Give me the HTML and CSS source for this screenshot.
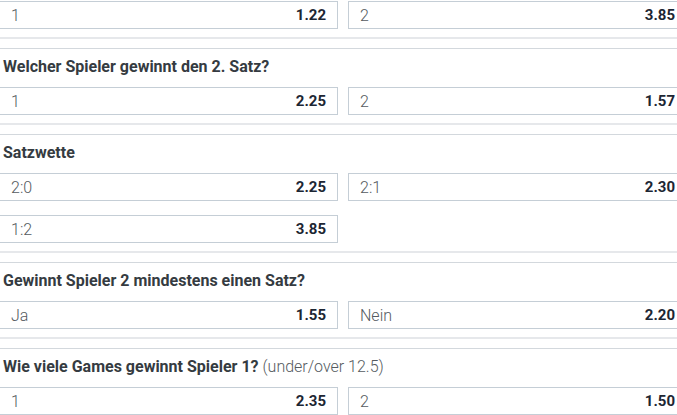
FILE: index.html
```html
<!DOCTYPE html>
<html lang="de">
<head>
    <meta charset="UTF-8">
    <meta name="viewport" content="width=device-width, initial-scale=1.0">
    <title>Wetten</title>
    <link rel="stylesheet" href="styles.css">
</head>
<body>
    <div class="markets">
        <div class="market market-first">
            <div class="odds-grid">
                <button class="odd"><span class="label">1</span><span class="price">1.22</span></button>
                <button class="odd"><span class="label">2</span><span class="price">3.85</span></button>
            </div>
        </div>

        <div class="market">
            <div class="market-title">Welcher Spieler gewinnt den 2. Satz?</div>
            <div class="odds-grid">
                <button class="odd"><span class="label">1</span><span class="price">2.25</span></button>
                <button class="odd"><span class="label">2</span><span class="price">1.57</span></button>
            </div>
        </div>

        <div class="market">
            <div class="market-title">Satzwette</div>
            <div class="odds-grid">
                <button class="odd"><span class="label">2:0</span><span class="price">2.25</span></button>
                <button class="odd"><span class="label">2:1</span><span class="price">2.30</span></button>
                <button class="odd"><span class="label">1:2</span><span class="price">3.85</span></button>
            </div>
        </div>

        <div class="market">
            <div class="market-title">Gewinnt Spieler 2 mindestens einen Satz?</div>
            <div class="odds-grid">
                <button class="odd"><span class="label">Ja</span><span class="price">1.55</span></button>
                <button class="odd"><span class="label">Nein</span><span class="price">2.20</span></button>
            </div>
        </div>

        <div class="market">
            <div class="market-title">Wie viele Games gewinnt Spieler 1? <span class="line">(under/over 12.5)</span></div>
            <div class="odds-grid">
                <button class="odd"><span class="label">1</span><span class="price">2.35</span></button>
                <button class="odd"><span class="label">2</span><span class="price">1.50</span></button>
            </div>
        </div>
    </div>
</body>
</html>
```

FILE: styles.css
```css
body {
    font-family: Roboto, "Liberation Sans", Arial, sans-serif;
    margin: 0;
    padding: 0;
    background-color: #ffffff;
    overflow: hidden;
}
.markets {
    width: 677px;
    padding-top: 1px;
    overflow: hidden;
}
.market {
    border-top: 1px solid #d3d8dd;
    border-bottom: 2px solid #e6e8eb;
    padding-bottom: 8px;
    margin-bottom: 9px;
}
.market-first {
    border-top: none;
}
.market-title {
    height: 38px;
    line-height: 36px;
    padding-left: 3px;
    font-size: 16px;
    font-weight: bold;
    color: #353b41;
}
.market-title .line {
    font-weight: 300;
    color: #555b61;
}
.odds-grid {
    display: grid;
    grid-template-columns: 339px 339px;
    gap: 14px 10px;
    margin-left: -1px;
    width: 688px;
}
.odd {
    display: flex;
    justify-content: space-between;
    align-items: center;
    height: 28px;
    padding: 0 11px 0 11px;
    border: 1px solid #c5ced6;
    background-color: #ffffff;
    font-family: inherit;
    cursor: pointer;
}
.odd .label {
    font-size: 16px;
    font-weight: 300;
    color: #545a60;
}
.odd .price {
    font-size: 15px;
    font-weight: bold;
    color: #1d2633;
}
```
